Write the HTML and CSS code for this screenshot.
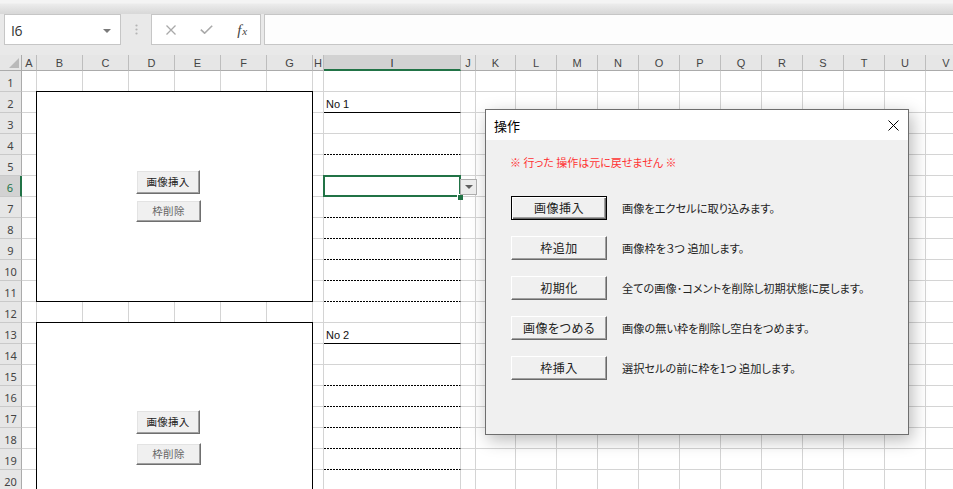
FILE: index.html
```html
<!DOCTYPE html>
<html lang="ja">
<head>
<meta charset="utf-8">
<title>操作</title>
<link rel="stylesheet" href="styles.css">
</head>
<body>
<div class="app">
  <div class="ribbon-edge"></div>
  <div class="fbar">
    <div class="namebox">
      <span class="nb-text">I6</span>
      <svg class="nb-arrow" width="8" height="4" viewBox="0 0 8 4"><path d="M0 0H8L4 4Z" fill="#7a7a7a"/></svg>
    </div>
    <svg class="grip" width="3" height="11" viewBox="0 0 3 11"><circle cx="1.5" cy="1.5" r="1.1" fill="#b4b4b4"/><circle cx="1.5" cy="5.5" r="1.1" fill="#b4b4b4"/><circle cx="1.5" cy="9.5" r="1.1" fill="#b4b4b4"/></svg>
    <div class="fxbox">
      <span class="fx-slot"><svg width="12" height="10" viewBox="0 0 12 10"><path d="M1.5 0.5L10.5 9.5M10.5 0.5L1.5 9.5" stroke="#a9a9a9" stroke-width="1.3" fill="none"/></svg></span>
      <span class="fx-slot"><svg width="13" height="9" viewBox="0 0 13 9"><path d="M0.8 4.6L4.6 8.2L12.2 0.8" stroke="#a9a9a9" stroke-width="1.6" fill="none"/></svg></span>
      <span class="fx-slot fx"><i>f</i><i class="fx-x">x</i></span>
    </div>
    <div class="formula"></div>
  </div>

  <div class="sheet">
    <div class="col w-rh">
      <div class="ch corner"><svg width="10" height="10" viewBox="0 0 10 10"><path d="M10 0V10H0Z" fill="#b9b9b9"/></svg></div>
      <div class="rh">1</div><div class="rh">2</div><div class="rh">3</div><div class="rh">4</div><div class="rh">5</div>
      <div class="rh rh-sel">6</div><div class="rh">7</div><div class="rh">8</div><div class="rh">9</div><div class="rh">10</div>
      <div class="rh">11</div><div class="rh">12</div><div class="rh">13</div><div class="rh">14</div><div class="rh">15</div>
      <div class="rh">16</div><div class="rh">17</div><div class="rh">18</div><div class="rh">19</div><div class="rh">20</div>
    </div>
    <div class="col w-a"><div class="ch">A</div><div class="cb"></div></div>
    <div class="col w-b"><div class="ch">B</div><div class="cb"></div></div>
    <div class="col w-b"><div class="ch">C</div><div class="cb"></div></div>
    <div class="col w-b"><div class="ch">D</div><div class="cb"></div></div>
    <div class="col w-b"><div class="ch">E</div><div class="cb"></div></div>
    <div class="col w-b"><div class="ch">F</div><div class="cb"></div></div>
    <div class="col w-b"><div class="ch">G</div><div class="cb"></div></div>
    <div class="col w-h"><div class="ch">H</div><div class="cb"></div></div>
    <div class="col w-i">
      <div class="ch ch-sel">I</div>
      <div class="cells">
        <div class="cell"></div>
        <div class="cell label solid">No 1</div>
        <div class="cell"></div>
        <div class="cell dash"></div>
        <div class="cell dash"></div>
        <div class="cell dash active">
          <span class="fill-handle"></span>
          <span class="dd-btn"><svg width="8" height="4" viewBox="0 0 8 4"><path d="M0 0H8L4 4Z" fill="#606060"/></svg></span>
        </div>
        <div class="cell dash"></div>
        <div class="cell dash"></div>
        <div class="cell dash"></div>
        <div class="cell dash"></div>
        <div class="cell dash"></div>
        <div class="cell"></div>
        <div class="cell label solid">No 2</div>
        <div class="cell"></div>
        <div class="cell dash"></div>
        <div class="cell dash"></div>
        <div class="cell dash"></div>
        <div class="cell dash"></div>
        <div class="cell dash"></div>
        <div class="cell"></div>
      </div>
    </div>
    <div class="col w-a"><div class="ch">J</div><div class="cb"></div></div>
    <div class="col w-k"><div class="ch">K</div><div class="cb"></div></div>
    <div class="col w-l"><div class="ch">L</div><div class="cb"></div></div>
    <div class="col w-l"><div class="ch">M</div><div class="cb"></div></div>
    <div class="col w-l"><div class="ch">N</div><div class="cb"></div></div>
    <div class="col w-l"><div class="ch">O</div><div class="cb"></div></div>
    <div class="col w-l"><div class="ch">P</div><div class="cb"></div></div>
    <div class="col w-l"><div class="ch">Q</div><div class="cb"></div></div>
    <div class="col w-l"><div class="ch">R</div><div class="cb"></div></div>
    <div class="col w-l"><div class="ch">S</div><div class="cb"></div></div>
    <div class="col w-l"><div class="ch">T</div><div class="cb"></div></div>
    <div class="col w-l"><div class="ch">U</div><div class="cb"></div></div>
    <div class="col w-l"><div class="ch">V</div><div class="cb"></div></div>
  </div>

  <div class="frame frame-1">
    <button class="sbtn sbtn-ins">画像挿入</button>
    <button class="sbtn sbtn-del">枠削除</button>
  </div>
  <div class="frame frame-2">
    <button class="sbtn sbtn-ins">画像挿入</button>
    <button class="sbtn sbtn-del">枠削除</button>
  </div>

  <div class="dialog">
    <div class="dlg-title">
      <span>操作</span>
      <svg width="11" height="11" viewBox="0 0 11 11"><path d="M0.5 0.5L10.5 10.5M10.5 0.5L0.5 10.5" stroke="#000" stroke-width="1" fill="none"/></svg>
    </div>
    <div class="dlg-body">
      <div class="note">※ 行った 操作は元に戻せません ※</div>
      <div class="op-row"><button class="dbtn dbtn-default">画像挿入</button><span class="desc">画像をエクセルに取り込みます。</span></div>
      <div class="op-row"><button class="dbtn">枠追加</button><span class="desc">画像枠を３つ 追加します。</span></div>
      <div class="op-row"><button class="dbtn">初期化</button><span class="desc">全ての画像･コメントを削除し初期状態に戻します。</span></div>
      <div class="op-row"><button class="dbtn">画像をつめる</button><span class="desc">画像の無い枠を削除し空白をつめます。</span></div>
      <div class="op-row"><button class="dbtn">枠挿入</button><span class="desc">選択セルの前に枠を1つ 追加します。</span></div>
    </div>
  </div>
</div>
</body>
</html>
```

FILE: styles.css
```css
html, body {
  margin: 0;
  padding: 0;
  width: 953px;
  height: 489px;
  overflow: hidden;
  background: #fff;
  font-family: "Noto Sans CJK JP", "Noto Sans", sans-serif;
}

.app {
  position: relative;
  width: 953px;
  height: 489px;
  overflow: hidden;
  background: #e9e9e9;
}

.ribbon-edge {
  height: 14px;
  background: linear-gradient(#f4f4f4 0, #f4f4f4 3px, #ececec 4px, #d9d9d9 13px);
}

/* formula bar */
.fbar {
  height: 31px;
  display: flex;
  align-items: center;
  margin-bottom: 10px;
}

.namebox {
  box-sizing: border-box;
  width: 117px;
  height: 31px;
  margin-left: 4px;
  background: #fff;
  border: 1px solid #c6c6c6;
  display: flex;
  align-items: center;
  justify-content: space-between;
  padding: 2px 9px 0 6px;
}

.nb-text {
  font-family: "Open Sans", "Liberation Sans", sans-serif;
  font-size: 14px;
  color: #333;
  letter-spacing: -0.5px;
}

.grip {
  margin-left: 14px;
  flex: none;
}

.fxbox {
  box-sizing: border-box;
  width: 110px;
  height: 31px;
  margin-left: 13px;
  background: #fff;
  border: 1px solid #c6c6c6;
  display: flex;
  align-items: center;
}

.fx-slot {
  width: 36px;
  height: 100%;
  display: flex;
  align-items: center;
  justify-content: center;
}

.fx-slot:first-child {
  margin-left: 1px;
}

.fx {
  font-family: "Liberation Serif", serif;
  color: #444;
  font-size: 15px;
  padding-top: 1px;
}

.fx-x {
  font-size: 11px;
  margin-left: 1px;
  position: relative;
  top: 1px;
}

.formula {
  flex: 1;
  height: 31px;
  box-sizing: border-box;
  margin-left: 3px;
  background: #fdfdfd;
  border: 1px solid #c6c6c6;
  border-right: none;
}

/* sheet grid */
.sheet {
  display: flex;
  height: 434px;
  background: #fff;
}

.col {
  flex: none;
  display: flex;
  flex-direction: column;
  box-sizing: border-box;
}

.w-rh { width: 22px; }
.w-a { width: 15px; }
.w-b { width: 46px; }
.w-h { width: 11px; }
.w-i { width: 137px; }
.w-k { width: 40px; }
.w-l { width: 41px; }

.ch {
  box-sizing: border-box;
  height: 16px;
  flex: none;
  background: #e6e6e6;
  border-bottom: 1px solid #ababab;
  border-right: 1px solid #bdbdbd;
  display: flex;
  align-items: center;
  justify-content: center;
  font-family: "Liberation Sans", sans-serif;
  font-size: 11px;
  color: #444;
  padding-top: 1px;
}

.ch.corner {
  justify-content: flex-end;
  align-items: flex-end;
  padding: 0 2px 2px 0;
  border-right-color: #ababab;
}

.ch-sel {
  background: #d2d2d2;
  border-bottom: 2px solid #217346;
  color: #333;
}

.cb {
  flex: 1;
  border-right: 1px solid #d4d4d4;
  background: repeating-linear-gradient(to bottom, #fff 0, #fff 20px, #d4d4d4 20px, #d4d4d4 21px);
}

.rh {
  box-sizing: border-box;
  height: 21px;
  flex: none;
  background: #e6e6e6;
  border-right: 1px solid #ababab;
  border-bottom: 1px solid #c9c9c9;
  display: flex;
  align-items: center;
  justify-content: center;
  font-family: "Noto Sans", sans-serif;
  font-size: 11px;
  color: #444;
  padding-top: 2px;
}

.rh-sel {
  background: #d2d2d2;
  border-right: 2px solid #217346;
  color: #217346;
}

.cells {
  display: flex;
  flex-direction: column;
}

.cell {
  box-sizing: border-box;
  height: 21px;
  flex: none;
  border-right: 1px solid #d4d4d4;
  border-bottom: 1px solid #d4d4d4;
}

.cell.label {
  display: flex;
  align-items: flex-end;
  padding: 0 0 2px 2px;
  font-family: "Liberation Sans", sans-serif;
  font-size: 11px;
  color: #111;
}

.cell.solid {
  border-bottom-color: #000;
}

.cell.dash {
  border-bottom-color: transparent;
  background: repeating-linear-gradient(to right, #000 0, #000 2px, #fff 2px, #fff 3px) left bottom / 100% 1px no-repeat;
  background-origin: border-box;
  background-clip: border-box;
}

.cell.active {
  position: relative;
  z-index: 3;
}

.cell.active::before {
  content: "";
  position: absolute;
  left: -1px;
  top: -1px;
  right: -1px;
  bottom: -1px;
  border: 2px solid #217346;
}

.fill-handle {
  position: absolute;
  right: -3px;
  bottom: -4px;
  width: 5px;
  height: 5px;
  background: #217346;
  border: 1px solid #fff;
  border-right: none;
  border-bottom: none;
}

.dd-btn {
  position: absolute;
  left: 136px;
  top: 3px;
  width: 17px;
  height: 16px;
  box-sizing: border-box;
  background: #ececec;
  border: 1px solid #adadad;
  display: flex;
  align-items: center;
  justify-content: center;
}

/* picture frames (floating shapes) */
.frame {
  position: absolute;
  left: 36px;
  width: 277px;
  box-sizing: border-box;
  border: 1px solid #000;
  background: #fff;
  display: flex;
  flex-direction: column;
  align-items: flex-start;
  padding-left: 99px;
}

.frame-1 {
  top: 91px;
  height: 211px;
  padding-top: 78px;
  gap: 6px;
}

.frame-2 {
  top: 322px;
  height: 230px;
  padding-top: 87px;
  gap: 9px;
}

.sbtn {
  box-sizing: border-box;
  margin: 0;
  padding: 0;
  background: #f0f0f0;
  border: 1px solid;
  border-color: #fff #6f6f6f #6f6f6f #fff;
  box-shadow: inset -1px -1px 0 #a0a0a0, inset 1px 1px 0 #e3e3e3;
  font-family: "Noto Sans CJK JP", sans-serif;
  font-size: 10.5px;
  line-height: 1;
  letter-spacing: 0.3px;
}

.sbtn-ins {
  width: 64px;
  height: 24px;
  color: #222;
}

.sbtn-del {
  width: 65px;
  height: 22px;
  color: #666;
}

/* dialog */
.dialog {
  position: absolute;
  left: 485px;
  top: 109px;
  width: 424px;
  height: 326px;
  box-sizing: border-box;
  border: 1px solid #6e6e6e;
  background: #f0f0f0;
  box-shadow: 3px 5px 16px rgba(0, 0, 0, 0.28);
  font-family: "Noto Sans CJK JP", sans-serif;
  font-feature-settings: "palt";
}

.dlg-title {
  height: 30px;
  background: #fff;
  display: flex;
  align-items: center;
  justify-content: space-between;
  padding: 0 9px 0 8px;
  font-size: 13px;
  color: #000;
}

.dlg-body {
  display: flex;
  flex-direction: column;
  padding: 15px 0 0 24px;
}

.note {
  color: #ff3333;
  font-size: 11px;
  line-height: 14px;
  margin-bottom: 27px;
}

.op-row {
  display: flex;
  align-items: center;
  gap: 15px;
  margin-left: 1px;
}

.op-row + .op-row {
  margin-top: 16px;
}

.dbtn {
  box-sizing: border-box;
  width: 96px;
  height: 24px;
  margin: 0;
  padding: 0;
  background: #f0f0f0;
  border: 1px solid;
  border-color: #fff #696969 #696969 #fff;
  box-shadow: inset -1px -1px 0 #a0a0a0;
  font-family: "Noto Sans CJK JP", sans-serif;
  font-feature-settings: "palt";
  font-size: 12px;
  line-height: 1;
  color: #222;
  letter-spacing: 0.5px;
}

.dbtn-default {
  border-color: #000;
  box-shadow: inset 1px 1px 0 #fff, inset -1px -1px 0 #696969, inset -2px -2px 0 #a0a0a0;
}

.desc {
  font-size: 11.2px;
  color: #222;
  line-height: 14px;
}
```
